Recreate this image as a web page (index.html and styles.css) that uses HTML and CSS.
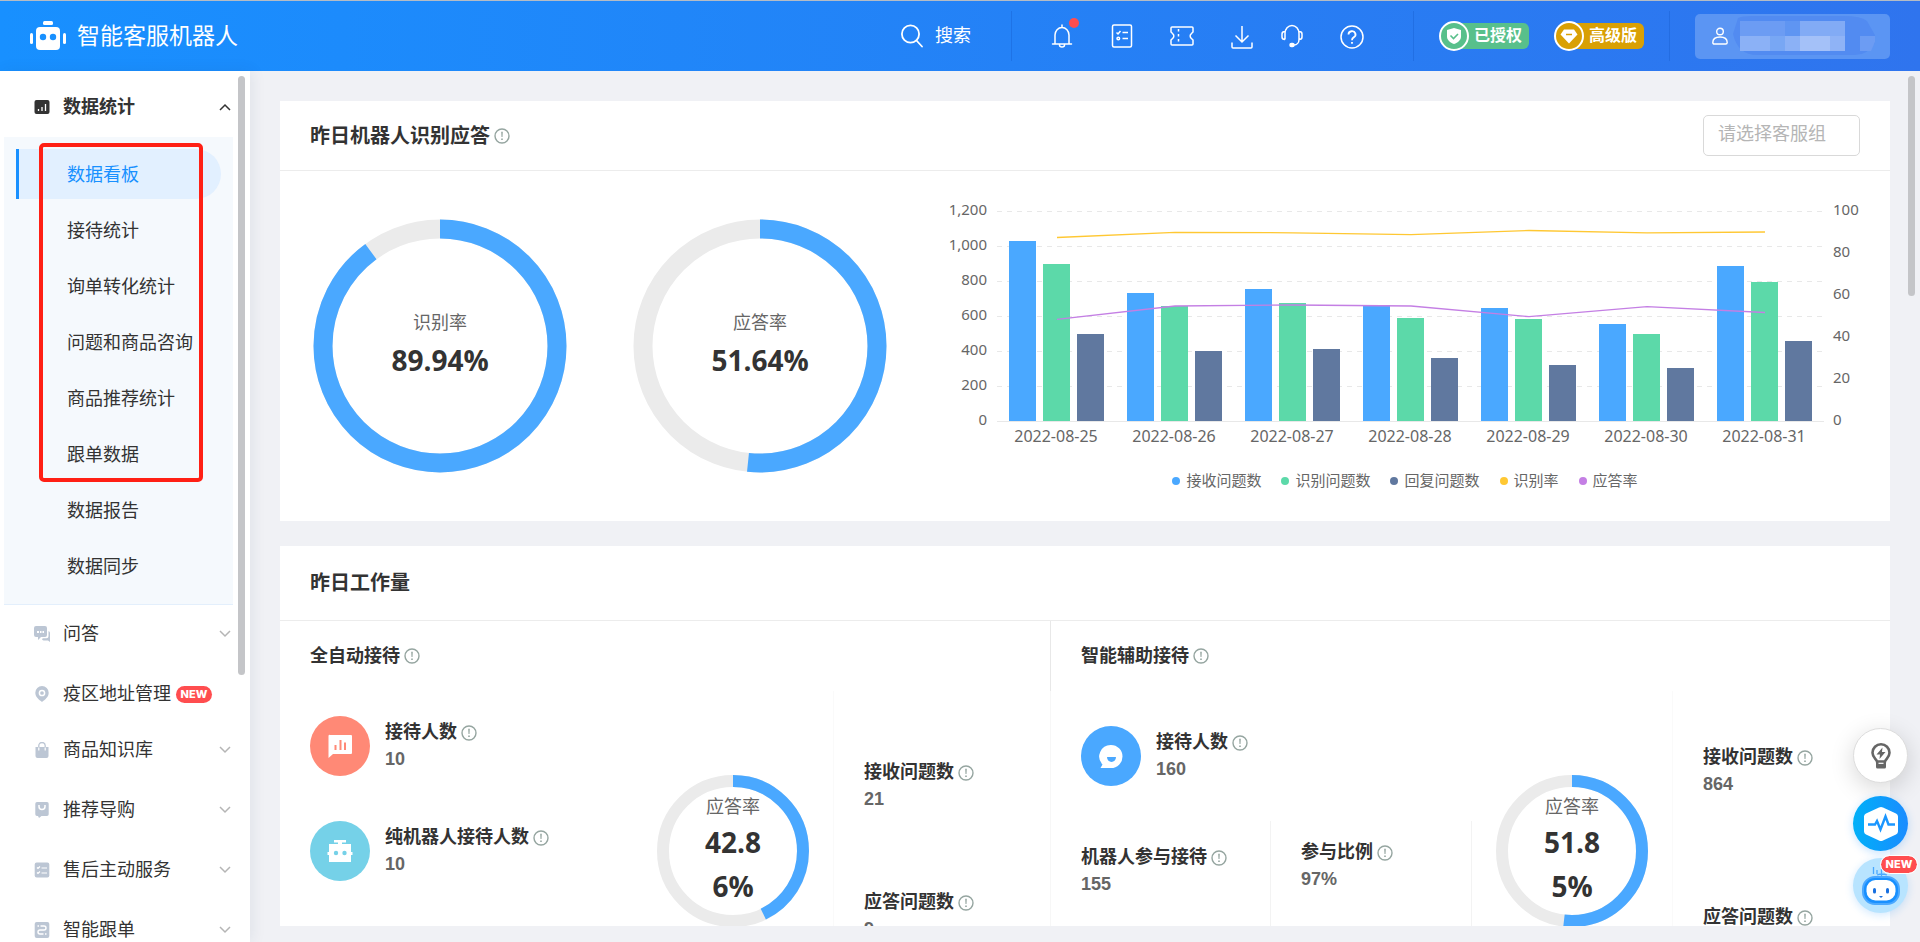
FILE: index.html
```html
<!DOCTYPE html>
<html lang="zh-CN">
<head>
<meta charset="utf-8">
<title>智能客服机器人</title>
<link rel="stylesheet" href="styles.css">
</head>
<body>
<svg class="sprite" aria-hidden="true">
  <symbol id="info" viewBox="0 0 16 16"><circle cx="8" cy="8" r="7" fill="none" stroke="#95a5a0" stroke-width="1.4"/><path d="M7.2 3.8h1.6l-.3 5.2h-1zM7.2 10.4h1.6v1.6H7.2z" fill="#95a5a0"/></symbol>
  <symbol id="chevron" viewBox="0 0 12 8"><path d="M1 1l5 5 5-5" fill="none" stroke="currentColor" stroke-width="1.5"/></symbol>
</svg>

<header class="topbar">
  <a class="brand" href="#">
    <svg class="brand-logo" viewBox="0 0 36 30" fill="#fff"><rect x="13" y="0" width="10" height="4" rx="1.5"/><rect x="6" y="6" width="24" height="23" rx="4"/><rect x="0" y="12" width="3" height="11" rx="1.5"/><rect x="33" y="12" width="3" height="11" rx="1.5"/><circle cx="13" cy="16" r="3.2" fill="#1890ff"/><circle cx="23" cy="16" r="3.2" fill="#1890ff"/></svg>
    <span>智能客服机器人</span>
  </a>
  <button class="search" type="button">
    <svg width="22" height="24" viewBox="0 0 22 24" fill="none" stroke="#fff" stroke-width="1.8" stroke-linecap="round"><circle cx="9.500" cy="10" r="8.600"/><path d="M15.500 16.500l5.500 6"/></svg>
    <span>搜索</span>
  </button>
  <nav class="tools">
    <button class="tool" type="button" aria-label="通知"><svg width="22" height="24" viewBox="0 0 22 24" fill="none" stroke="#fff" stroke-width="1.5"><path d="M1.500 20h19M4 20V11a7 7.500 0 0 1 14 0v9M11 1v2.500M8.500 21a2.500 2 0 0 0 5 0" stroke-linecap="round"/></svg><i class="dot"></i></button>
    <button class="tool" type="button" aria-label="任务"><svg width="22" height="24" viewBox="0 0 22 24" fill="none" stroke="#fff" stroke-width="1.5"><rect x="1.500" y="1" width="19" height="22" rx="1.500"/><path d="M5.500 8.500l1.500 1.500 2.500-3M11.500 8.500h5.500M11.500 14.500h5.500"/><circle cx="7.300" cy="14.500" r="1.300"/></svg></button>
    <button class="tool" type="button" aria-label="卡券"><svg width="24" height="20" viewBox="0 0 24 20" fill="none" stroke="#fff" stroke-width="1.500"><path d="M2 1h20a1 1 0 0 1 1 1v4l-1.500 1.500a3 3 0 0 0 0 5L23 14v4a1 1 0 0 1-1 1H2a1 1 0 0 1-1-1v-4l1.500-1.500a3 3 0 0 0 0-5L1 6V2a1 1 0 0 1 1-1z"/><path d="M8.500 3v15" stroke-dasharray="2.500 2.500"/></svg></button>
    <button class="tool" type="button" aria-label="下载"><svg class="low" width="22" height="24" viewBox="0 0 22 24" fill="none" stroke="#fff" stroke-width="1.500"><path d="M11 1v16M4.500 10.500L11 17l6.500-6.500M1 17.500V22a1 1 0 0 0 1 1h18a1 1 0 0 0 1-1v-4.500"/></svg></button>
    <button class="tool narrow" type="button" aria-label="客服"><svg width="22" height="24" viewBox="0 0 22 24" fill="none" stroke="#fff" stroke-width="1.500"><path d="M4 15.500V9.500a7 8 0 0 1 14 0v6c0 3-2 5.500-5 5.500M4 7.500c-2 0-3 1-3 2.500v3c0 1.500 1 2.500 3 2.500M18 7.500c2 0 3 1 3 2.500v3c0 1.500-1 2.500-3 2.500"/><rect x="9" y="19.500" width="4" height="3" rx="1.500" fill="#fff"/></svg></button>
    <button class="tool" type="button" aria-label="帮助"><svg class="low" width="24" height="24" viewBox="0 0 24 24" fill="none" stroke="#fff" stroke-width="1.500"><circle cx="12" cy="12" r="11"/><path d="M8.500 9.500a3.500 3.300 0 1 1 5.200 2.900c-1.200.7-1.700 1.200-1.700 2.800M12 17v1.800" stroke-width="1.800"/></svg></button>
  </nav>
  <div class="badges">
    <span class="plan plan-green"><svg viewBox="0 0 30 30"><circle cx="15" cy="15" r="14" fill="#58c08b" stroke="#fff" stroke-width="2"/><path d="M15 7l7 2v6.500c0 3.500-3 6-7 7.500-4-1.500-7-4-7-7.500V9z" fill="#fff"/><path d="M11.500 14.500l3 3 4.500-4.500" fill="none" stroke="#58c08b" stroke-width="1.600"/></svg>已授权</span>
    <span class="plan plan-gold"><svg viewBox="0 0 30 30"><circle cx="15" cy="15" r="14" fill="#d9a004" stroke="#fff" stroke-width="2"/><path d="M10 8.500h10l3.500 5L15 22.500l-8.500-9z" fill="#fff"/><path d="M12 13.500h6" stroke="#d9a004" stroke-width="1.500"/></svg>高级版</span>
  </div>
  <button class="user" type="button" aria-label="账号">
    <svg width="16" height="18" viewBox="0 0 16 18" fill="none" stroke="#fff" stroke-width="1.400"><circle cx="8" cy="4.500" r="3.300"/><path d="M.8 15.500c0-4 3.200-5.500 7.200-5.500s7.200 1.500 7.200 5.500c0 1-.6 1.500-1.500 1.500H2.300c-.9 0-1.500-.5-1.500-1.500z"/></svg>
    <svg class="mask" width="142" height="40" viewBox="0 0 142 40"><path d="M5 2Q8 0 20 0h90q18 0 24 5l8 14v8q-8 13-22 12H26Q5 40 0 18z" fill="#528bf1"/><path d="M7 5h105v15H7z" fill="#6c9cf3"/><path d="M67 5h45v15H67z" fill="#82abf5"/><path d="M52 5h15v15H52z" fill="#5f95f2"/><path d="M7 20h30v15H7z" fill="#8bb1f6"/><path d="M37 20h15v15H37z" fill="#78a7f4"/><path d="M52 20h15v15H52z" fill="#8bb1f6"/><path d="M67 20h30v15H67z" fill="#a4c1f8"/><path d="M97 20h15v15H97z" fill="#8fb3f6"/><path d="M127 20h15v6l-4 9h-11z" fill="#6c9cf3"/></svg>
  </button>
</header>

<div class="shell">
  <aside class="sidebar">
    <nav class="menu">
      <a class="row open" href="#"><svg class="ico" viewBox="0 0 16 16"><rect x=".5" y="1" width="15" height="14" rx="2" fill="#333"/><path d="M4.500 10v2M8 8v4M11.500 5v7" stroke="#fff" stroke-width="1.300"/></svg><span>数据统计</span><svg class="arrow up"><use href="#chevron"/></svg></a>
      <div class="submenu">
        <a class="sub active" href="#">数据看板</a>
        <a class="sub" href="#">接待统计</a>
        <a class="sub" href="#">询单转化统计</a>
        <a class="sub" href="#">问题和商品咨询</a>
        <a class="sub" href="#">商品推荐统计</a>
        <a class="sub" href="#">跟单数据</a>
        <a class="sub" href="#">数据报告</a>
        <a class="sub" href="#">数据同步</a>
        <div class="highlight"></div>
      </div>
      <a class="row" href="#"><svg class="ico" viewBox="0 0 16 16" fill="#bcc6d4"><path d="M2 0h9a2 2 0 0 1 2 2v7a2 2 0 0 1-2 2H7l-3 3v-3H2a2 2 0 0 1-2-2V2a2 2 0 0 1 2-2z"/><path d="M14.500 5A2 2 0 0 1 16 7v9l-2-1.500H9.500A2 2 0 0 1 8 13l1-.8h3.500a2 2 0 0 0 2-2z"/><path d="M3 5h2v2H3zM6 5h1.500v2H6zM8.500 5H10v2H8.500z" fill="#fff"/></svg><span>问答</span><svg class="arrow"><use href="#chevron"/></svg></a>
      <a class="row plain" href="#"><svg class="ico" viewBox="0 0 16 16"><path d="M8 0a6.700 6.700 0 0 1 6.700 6.700C14.700 11 11 13.500 8 16 5 13.500 1.300 11 1.300 6.700A6.700 6.700 0 0 1 8 0z" fill="#bcc6d4"/><circle cx="8" cy="7" r="2.600" fill="none" stroke="#fff" stroke-width="1.500"/></svg><span>疫区地址管理</span><b class="new">NEW</b></a>
      <a class="row" href="#"><svg class="ico" viewBox="0 0 16 16"><path d="M1.500 5h13v9a2 2 0 0 1-2 2h-9a2 2 0 0 1-2-2z" fill="#bcc6d4"/><path d="M4.800 5V3.500a3.200 3 0 0 1 6.400 0V5" fill="none" stroke="#bcc6d4" stroke-width="1.300"/><path d="M4.800 5.500v3M11.200 5.500v3" stroke="#fff" stroke-width="1.200"/></svg><span>商品知识库</span><svg class="arrow"><use href="#chevron"/></svg></a>
      <a class="row" href="#"><svg class="ico" viewBox="0 0 16 16"><path d="M3 0h10a1.700 1.700 0 0 1 1.700 1.700v10.600A1.700 1.700 0 0 1 13 14H7.500L5 16l-1-2H3a1.700 1.700 0 0 1-1.700-1.700V1.700A1.700 1.700 0 0 1 3 0z" fill="#bcc6d4"/><path d="M5 3v1.500a3 3 0 0 0 6 0V3" fill="none" stroke="#fff" stroke-width="1.500"/></svg><span>推荐导购</span><svg class="arrow"><use href="#chevron"/></svg></a>
      <a class="row" href="#"><svg class="ico" viewBox="0 0 16 16"><rect x=".7" y=".5" width="14.600" height="15" rx="2" fill="#bcc6d4"/><path d="M3 5.500l1 1L6 4.500M3 10.500l1 1 2-2M7.500 6H13M7.500 11H13" fill="none" stroke="#fff" stroke-width="1.200"/></svg><span>售后主动服务</span><svg class="arrow"><use href="#chevron"/></svg></a>
      <a class="row" href="#"><svg class="ico" viewBox="0 0 16 16"><rect x=".7" y="0" width="14.600" height="16" rx="2" fill="#bcc6d4"/><path d="M3.500 4H5M6.500 4H10a2 2 0 0 1 0 4H6a2 2 0 0 0 0 4h3.500M11 12h1.500" fill="none" stroke="#fff" stroke-width="1.400"/></svg><span>智能跟单</span><svg class="arrow"><use href="#chevron"/></svg></a>
    </nav>
    <i class="thumb thumb-side"></i>
  </aside>

  <main class="content">
    <section class="card">
      <div class="card-head">
        <h2>昨日机器人识别应答</h2><svg class="info"><use href="#info"/></svg>
        <input class="group-select" type="text" placeholder="请选择客服组" aria-label="请选择客服组">
      </div>
      <div class="overview">
        <div class="gauge">
          <svg viewBox="0 0 254 254"><circle class="track" cx="127" cy="127" r="117"/><circle class="value" cx="127" cy="127" r="117" pathLength="10000" stroke-dasharray="8994 10000" transform="rotate(-90 127 127)"/></svg>
          <div class="gauge-text"><span>识别率</span><strong>89.94%</strong></div>
        </div>
        <div class="gauge">
          <svg viewBox="0 0 254 254"><circle class="track" cx="127" cy="127" r="117"/><circle class="value" cx="127" cy="127" r="117" pathLength="10000" stroke-dasharray="5164 10000" transform="rotate(-90 127 127)"/></svg>
          <div class="gauge-text"><span>应答率</span><strong>51.64%</strong></div>
        </div>
        <div class="chart">
          <svg viewBox="0 0 970 290" role="img" aria-label="问题数与比率">
            <path class="grid" d="M77 40.500H904M77 75.500H904M77 110.500H904M77 145.500H904M77 180.500H904M77 215.500H904"/>
            <path class="axis" d="M77 250.500H904"/>
            <path fill="#4aa8ff" d="M89 250v-180h27v180zM207 250v-128h27v128zM325 250v-132h27v132zM443 250v-116h27v116zM561 250v-113h27v113zM679 250v-97h27v97zM797 250v-155h27v155z"/>
            <path fill="#5cd9a9" d="M123 250v-157h27v157zM241 250v-115h27v115zM359 250v-118h27v118zM477 250v-103h27v103zM595 250v-102h27v102zM713 250v-87h27v87zM831 250v-139h27v139z"/>
            <path fill="#60789f" d="M157 250v-87h27v87zM275 250v-70h27v70zM393 250v-72h27v72zM511 250v-63h27v63zM629 250v-56h27v56zM747 250v-53h27v53zM865 250v-80h27v80z"/>
            <path class="line" stroke="#ffc833" d="M137 66.500L255 61.300 373 61.800 491 63.700 609 59.500 727 61.800 845 61"/>
            <path class="line" stroke="#c47fe4" d="M137 148.300L255 135 373 134 491 135 609 145.700 727 135.700 845 141.500"/>
            <g class="ticks" text-anchor="end"><text x="67" y="44">1,200</text><text x="67" y="79">1,000</text><text x="67" y="114">800</text><text x="67" y="149">600</text><text x="67" y="184">400</text><text x="67" y="219">200</text><text x="67" y="254">0</text></g>
            <g class="ticks"><text x="913" y="44">100</text><text x="913" y="86">80</text><text x="913" y="128">60</text><text x="913" y="170">40</text><text x="913" y="212">20</text><text x="913" y="254">0</text></g>
            <g class="dates" text-anchor="middle"><text x="136" y="271">2022-08-25</text><text x="254" y="271">2022-08-26</text><text x="372" y="271">2022-08-27</text><text x="490" y="271">2022-08-28</text><text x="608" y="271">2022-08-29</text><text x="726" y="271">2022-08-30</text><text x="844" y="271">2022-08-31</text></g>
          </svg>
          <ul class="legend"><li class="c-blue">接收问题数</li><li class="c-green">识别问题数</li><li class="c-navy">回复问题数</li><li class="c-yellow">识别率</li><li class="c-purple">应答率</li></ul>
        </div>
      </div>
    </section>

    <section class="card">
      <div class="card-head tall"><h2>昨日工作量</h2></div>
      <div class="work">
        <div class="half auto">
          <h3>全自动接待<svg class="info"><use href="#info"/></svg></h3>
          <div class="cols">
            <div class="people">
              <div class="person"><svg class="disc" viewBox="0 0 60 60"><circle cx="30" cy="30" r="30" fill="#ff8976"/><path d="M20 19h21a1 1 0 0 1 1 1v17a1 1 0 0 1-1 1H23l-4.500 4V20a1 1 0 0 1 1.500-1z" fill="#fff"/><path d="M25.500 29v5M30.500 24v10M35 26.500V34" stroke="#ff8976" stroke-width="2"/></svg><div class="stat"><b>接待人数<svg class="info"><use href="#info"/></svg></b><em>10</em></div></div>
              <div class="person"><svg class="disc" viewBox="0 0 60 60"><circle cx="30" cy="30" r="30" fill="#75d1e8"/><path d="M24 19h12v2.500h-4V23h9v8h1.500v3H41v7H19v-7h-1.500v-3H19v-8h9v-1.500h-4z" fill="#fff"/><circle cx="26" cy="32" r="2.200" fill="#75d1e8"/><circle cx="34.500" cy="32" r="2.200" fill="#75d1e8"/></svg><div class="stat"><b>纯机器人接待人数<svg class="info"><use href="#info"/></svg></b><em>10</em></div></div>
            </div>
            <div class="rate">
              <div class="gauge small"><svg viewBox="0 0 152 152"><circle class="track" cx="76" cy="76" r="70"/><circle class="value" cx="76" cy="76" r="70" pathLength="10000" stroke-dasharray="4286 10000" transform="rotate(-90 76 76)"/></svg><div class="gauge-text"><span>应答率</span><strong>42.86%</strong></div></div>
            </div>
            <div class="questions">
              <div class="stat"><b>接收问题数<svg class="info"><use href="#info"/></svg></b><em>21</em></div>
              <div class="stat"><b>应答问题数<svg class="info"><use href="#info"/></svg></b><em>9</em></div>
            </div>
          </div>
        </div>
        <div class="half assist">
          <h3>智能辅助接待<svg class="info"><use href="#info"/></svg></h3>
          <div class="cols">
            <div class="assist-stats">
              <div class="person"><svg class="disc" viewBox="0 0 60 60"><circle cx="30" cy="30" r="30" fill="#4aa8ff"/><path d="M30 19a11.500 11.500 0 1 1 0 23H19.500l2-3.500A11.500 11.500 0 0 1 30 19z" fill="#fff"/><path d="M26 31h9a4.500 5 0 0 1-9 0z" fill="#4aa8ff"/></svg><div class="stat"><b>接待人数<svg class="info"><use href="#info"/></svg></b><em>160</em></div></div>
              <div class="pair">
                <div class="stat"><b>机器人参与接待<svg class="info"><use href="#info"/></svg></b><em>155</em></div>
                <div class="stat ratio"><b>参与比例<svg class="info"><use href="#info"/></svg></b><em>97%</em></div>
              </div>
            </div>
            <div class="rate">
              <div class="gauge small"><svg viewBox="0 0 152 152"><circle class="track" cx="76" cy="76" r="70"/><circle class="value" cx="76" cy="76" r="70" pathLength="10000" stroke-dasharray="5185 10000" transform="rotate(-90 76 76)"/></svg><div class="gauge-text"><span>应答率</span><strong>51.85%</strong></div></div>
            </div>
            <div class="questions">
              <div class="stat"><b>接收问题数<svg class="info"><use href="#info"/></svg></b><em>864</em></div>
              <div class="stat"><b>应答问题数<svg class="info"><use href="#info"/></svg></b></div>
            </div>
          </div>
        </div>
      </div>
    </section>
  </main>
  <i class="thumb thumb-main"></i>
  <div class="floats">
    <button class="float bulb" type="button" aria-label="建议"><svg width="20" height="26" viewBox="0 0 20 26"><path d="M6 18.500C5.500 16 1.500 14.500 1.500 9.800a8.500 8.500 0 0 1 17 0c0 4.700-4 6.200-4.500 8.700z" fill="none" stroke="#666" stroke-width="2.600"/><path d="M5 18h10v6a1.500 1.500 0 0 1-1.500 1.500h-7A1.500 1.500 0 0 1 5 24z" fill="#666"/><path d="M7.500 20.300h5" stroke="#fff" stroke-width="1.200"/><path d="M11.500 4.500L5.500 11.500h3.500l-.5 4.500 6-7h-3.500z" fill="#666"/></svg></button>
    <button class="float pulse" type="button" aria-label="诊断"><svg width="36" height="36" viewBox="0 0 36 36"><path d="M16 1.500q2-1 4 0l13 6q2 1 2 3v15q0 2-2 3l-13 6q-2 1-4 0l-13-6q-2-1-2-3v-15q0-2 2-3z" fill="#fff"/><path d="M5 18.500h7l2-3.500 3.500 8.500 5-13 3 8H32" fill="none" stroke="#1a96ff" stroke-width="2.400"/></svg></button>
    <button class="float bot" type="button" aria-label="机器人"><svg width="40" height="40" viewBox="0 0 40 40"><path d="M12.500 1v7M16 4v4M20.500 3v8M16 9q5-2 10 0" stroke="#4aa8ff" fill="none" stroke-width="1.300"/><rect x="2" y="11" width="36" height="27" rx="12" fill="#1890ff" stroke="#4aa8ff" stroke-width="2"/><rect x="5.500" y="14" width="29" height="20.500" rx="9" fill="#fff"/><rect x="12" y="22" width="3" height="5.500" rx="1.500" fill="#1870e0"/><rect x="25" y="22" width="3" height="5.500" rx="1.500" fill="#1870e0"/><path d="M18 30h4l-2 2z" fill="#1870e0"/></svg><b class="new">NEW</b></button>
  </div>
</div>
</body>
</html>
```
FILE: styles.css
```css
* { box-sizing: border-box; }
body {
  margin: 0;
  height: 100vh;
  display: flex;
  flex-direction: column;
  overflow: hidden;
  background: #f0f1f5;
  color: #333;
  font: 18px/26px "Liberation Sans", "Noto Sans CJK SC", sans-serif;
}
a { color: inherit; text-decoration: none; }
button { border: 0; padding: 0; background: none; color: inherit; font: inherit; cursor: pointer; }
h2, h3, ul { margin: 0; padding: 0; }
em { font-style: normal; }
svg { display: block; flex: none; }
.sprite { position: absolute; width: 0; height: 0; }

/* top bar */
.topbar {
  flex: none;
  display: flex;
  align-items: center;
  height: 71px;
  padding: 0 30px;
  border-top: 1px solid #b5bcc5;
  background: linear-gradient(90deg, #1890ff, #2f74ee);
  color: #fff;
}
.brand { display: flex; align-items: center; gap: 11px; font-size: 23px; }
.brand-logo { width: 36px; height: 30px; }
.search { display: flex; align-items: center; gap: 12px; margin-left: auto; padding-right: 40px; }
.tools {
  display: flex;
  align-items: center;
  padding: 0 31px 0 20px;
  height: 50px;
  border: solid rgba(20, 90, 200, .35);
  border-width: 0 1px;
}
.tool { position: relative; display: flex; justify-content: center; width: 60px; }
.tool.narrow { width: 40px; margin-right: 10px; }
.tool .low { margin-top: 2px; }
.dot { position: absolute; top: -6px; right: 13px; width: 10px; height: 10px; border-radius: 50%; background: #ff4d4f; }
.badges {
  display: flex;
  align-items: center;
  gap: 25px;
  height: 50px;
  padding: 0 25px;
  border-right: 1px solid rgba(20, 90, 200, .35);
}
.plan {
  display: flex;
  align-items: center;
  gap: 5px;
  width: 90px;
  height: 26px;
  border-radius: 6px;
  font-size: 16px;
  font-weight: bold;
}
.plan svg { width: 30px; height: 30px; }
.plan-green { background: linear-gradient(90deg, transparent 15px, #58c08b 15px); }
.plan-gold { background: linear-gradient(90deg, transparent 15px, #d9a004 15px); }
.user {
  display: flex;
  align-items: center;
  gap: 5px;
  width: 195px;
  height: 45px;
  margin-left: 25px;
  padding-left: 17px;
  border-radius: 5px;
  background: #5b95f3;
}

.shell { position: relative; display: flex; flex: 1; min-height: 0; }

/* side menu */
.sidebar {
  position: relative;
  flex: none;
  width: 250px;
  overflow: hidden;
  background: #fff;
  box-shadow: 2px 0 14px rgba(30, 50, 90, .08);
}
.menu { padding: 8px 17px 0 4px; }
.row {
  display: flex;
  align-items: center;
  gap: 13px;
  height: 56px;
  margin-bottom: 4px;
  padding: 0 2px 0 30px;
}
.row.open { margin-bottom: 2px; font-weight: bold; }
.row.plain { margin-bottom: 0; }
.ico { width: 16px; height: 16px; }
.arrow { width: 12px; height: 8px; margin-left: auto; color: #b5b5b5; }
.arrow.up { transform: rotate(180deg); color: #333; }
.new {
  width: 36px;
  height: 17px;
  border-radius: 9px;
  background: #ff4d4f;
  color: #fff;
  font: 800 11px/17px Inter, sans-serif;
  text-align: center;
}
.row .new { margin-left: -8px; }
.submenu {
  position: relative;
  display: flex;
  flex-direction: column;
  gap: 6px;
  padding: 12px 12px 13px;
  margin-bottom: 1px;
  border-bottom: 1px solid #e3effc;
  background: #f5f9fd;
}
.sub { height: 50px; padding-left: 48px; border-left: 3px solid transparent; line-height: 52px; }
.sub.active { border-color: #1890ff; border-radius: 0 25px 25px 0; background: #e2f0ff; color: #1890ff; }
.highlight {
  position: absolute;
  top: 6px;
  left: 35px;
  width: 164px;
  height: 339px;
  border: 4px solid #ff2015;
  border-radius: 5px;
}
.thumb { position: absolute; top: 5px; width: 7px; border-radius: 4px; background: #c4c5c8; }
.thumb-side { right: 5px; height: 599px; }
.thumb-main { right: 5px; height: 220px; }

/* content */
.content { flex: 1; min-width: 0; margin-bottom: 16px; padding: 30px 30px 0; overflow: hidden; }
.card { margin-bottom: 25px; background: #fff; }
.card-head { display: flex; align-items: center; height: 70px; padding: 0 30px; border-bottom: 1px solid #ececec; }
.card-head.tall { height: 75px; }
h2 { font-size: 20px; }
.info { width: 16px; height: 16px; margin-left: 4px; }
.group-select {
  width: 157px;
  height: 41px;
  margin-left: auto;
  padding: 0 14px 2px;
  border: 1px solid #d9d9d9;
  border-radius: 5px;
  font: inherit;
}
.group-select::placeholder { color: #b5b5b5; }
.overview { display: grid; grid-template-columns: 320px 320px minmax(0, 1fr); height: 350px; align-items: center; }
.gauge { position: relative; width: 254px; margin: 0 auto; }
.gauge svg { width: 100%; }
.gauge circle { fill: none; stroke-width: 19; }
.gauge .track { stroke: #ebebeb; }
.gauge .value { stroke: #4aa8ff; }
.gauge-text {
  position: absolute;
  inset: 0;
  display: flex;
  flex-direction: column;
  align-items: center;
  justify-content: center;
  color: #666;
}
.gauge strong { color: #333; font: 700 28px/44px "Open Sans", sans-serif; text-align: center; margin-top: 2px; }
.gauge.small { width: 152px; }
.gauge.small circle { stroke-width: 12; }
.gauge.small strong { width: 64px; margin-top: 0; word-break: break-all; }
.chart { align-self: start; }
.chart > svg { width: 100%; }
.grid { stroke: #e8e8e8; stroke-dasharray: 5 5; }
.axis { stroke: #e8e8e8; }
.line { fill: none; stroke-width: 1.3; }
.ticks, .dates { fill: #666; font: 15px "Noto Sans", sans-serif; }
.dates { font-size: 16px; }
.legend { display: flex; justify-content: center; gap: 20px; list-style: none; color: #666; font-size: 15px; line-height: 40px; }
.legend li { display: flex; align-items: center; gap: 6px; }
.legend li::before { content: ""; width: 8px; height: 8px; border-radius: 50%; background: var(--c); }
.c-blue { --c: #4aa8ff; }
.c-green { --c: #5cd9a9; }
.c-navy { --c: #60789f; }
.c-yellow { --c: #ffc833; }
.c-purple { --c: #c47fe4; }

/* workload */
.work { display: grid; grid-template-columns: 77fr 84fr; }
h3 { display: flex; align-items: center; height: 70px; padding: 0 30px; font-size: 18px; }
.assist h3 { border-left: 1px solid #e8e8e8; }
.cols { display: grid; height: 320px; }
.auto .cols { grid-template-columns: minmax(0, 1fr) 200px 217px; }
.assist .cols { grid-template-columns: minmax(0, 1fr) 200px 218px; border-left: 1px solid #f7f7f7; }
.people, .questions, .assist-stats, .rate { display: flex; flex-direction: column; }
.people { gap: 45px; padding: 25px 30px; }
.person { display: flex; gap: 15px; }
.disc { width: 60px; height: 60px; }
.stat b { display: flex; align-items: center; line-height: 27px; white-space: nowrap; }
.stat em { display: block; color: #666; font-weight: bold; line-height: 27px; }
.person .stat { padding-top: 3px; }
.rate { justify-content: center; }
.questions { gap: 76px; padding: 68px 30px 0; border-left: 1px solid #fafafa; }
.assist .questions { gap: 106px; padding-top: 53px; }
.assist-stats { gap: 35px; padding-top: 35px; }
.assist-stats .person { padding-left: 30px; }
.pair { display: grid; flex: 1; grid-template-columns: 219fr 202fr; }
.pair .stat { padding: 23px 0 0 30px; }
.pair .ratio { padding-top: 18px; border: solid #f3f3f3; border-width: 0 1px; }

/* floating actions */
.floats { position: absolute; right: 12px; bottom: 29px; display: flex; flex-direction: column; gap: 7px; }
.float { position: relative; display: flex; align-items: center; justify-content: center; width: 55px; height: 55px; border-radius: 50%; }
.bulb { margin-bottom: 6px; border: 1px solid #ddd; background: #fff; box-shadow: 0 6px 24px rgba(0, 0, 0, .16); }
.pulse { background: linear-gradient(90deg, #00b0f8, #1a8cff); box-shadow: 0 2px 8px rgba(24, 144, 255, .25); }
.bot { background: #b8e4ff; box-shadow: 0 2px 8px rgba(24, 144, 255, .2); }
.bot .new { position: absolute; top: -2px; right: -9px; outline: 1px solid #fff; }
```
